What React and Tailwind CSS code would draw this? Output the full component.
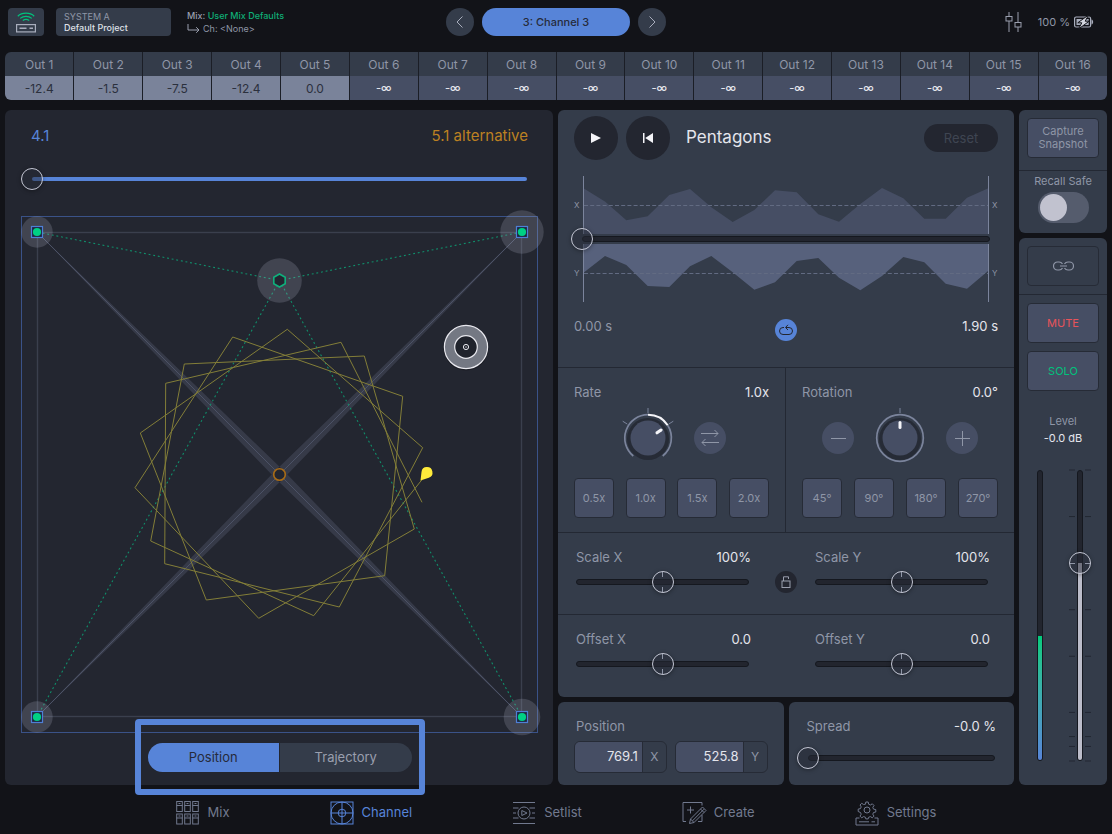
import React, { useState } from "react";

const OUTPUTS = ["-12.4", "-1.5", "-7.5", "-12.4", "0.0"];

const THUMB =
  "[&::-webkit-slider-thumb]:appearance-none [&::-webkit-slider-thumb]:size-[22px] [&::-webkit-slider-thumb]:rounded-full [&::-webkit-slider-thumb]:border [&::-webkit-slider-thumb]:border-[#c3c6d3] [&::-webkit-slider-thumb]:bg-[#262a36]/50 [&::-webkit-slider-thumb]:shadow-[0_1px_4px_rgba(0,0,0,0.35)]";

const TICKS =
  "[&::-webkit-slider-thumb]:bg-[linear-gradient(to_bottom,#8f96a7_5px,transparent_5px,transparent_15px,#8f96a7_15px)] [&::-webkit-slider-thumb]:bg-[length:1px_100%] [&::-webkit-slider-thumb]:bg-center [&::-webkit-slider-thumb]:bg-no-repeat";

function Slider({ label, initial = 0, bright = false, ticks = false }) {
  const [value, setValue] = useState(initial);
  return (
    <div className="grid h-[22px] grid-cols-1 items-center">
      <div
        className={
          bright
            ? "col-start-1 row-start-1 h-1 rounded-full bg-[#5784d8]"
            : "col-start-1 row-start-1 h-[6px] rounded-full border border-[#15181f] bg-[#22252e]"
        }
      />
      <input
        type="range"
        aria-label={label}
        value={value}
        onChange={(e) => setValue(+e.target.value)}
        className={`relative col-start-1 row-start-1 -mx-[11px] h-[22px] w-[calc(100%+22px)] appearance-none bg-transparent ${THUMB} ${ticks ? TICKS : ""}`}
      />
    </div>
  );
}

function LabelledSlider({ label, value, initial, ticks }) {
  return (
    <div className="min-w-0 flex-1">
      <div className="flex justify-between text-[13px] leading-5">
        <span className="text-[#8f96a7]">{label}</span>
        <span className="text-[#e4e5ec]">{value}</span>
      </div>
      <div className="mt-1 pr-[2px]">
        <Slider label={label} initial={initial} ticks={ticks} />
      </div>
    </div>
  );
}

function Knob({ label, full }) {
  return (
    <div className="relative size-[60px] shrink-0">
      <svg viewBox="-30 -30 60 60" className="size-[60px] overflow-visible" fill="none" aria-hidden="true">
        <circle r="21" cy="1" fill="#262b36" />
        <circle r="17.5" fill="#464e64" />
        {full ? (
          <>
            <circle r="23.3" stroke="#7b849c" strokeWidth="1.7" />
            <path d="M0-30v5" stroke="#7b849c" />
            <path d="M0-15.5v5" stroke="#f4f4f8" strokeWidth="3" strokeLinecap="round" />
          </>
        ) : (
          <>
            <path d="M-14.7 18A23.3 23.3 0 0 1 0-23.3" stroke="#7b849c" strokeWidth="1.7" />
            <path d="M19.7-12.7A23.3 23.3 0 0 1 14.7 18" stroke="#7b849c" strokeWidth="1.7" />
            <path d="M0-23.3A23.3 23.3 0 0 1 19.7-12.7" stroke="#f4f4f8" strokeWidth="2" />
            <path d="M0-30v5M-25.3-16.8l4.6 2.9M25.3-16.8l-4.6 2.9" stroke="#7b849c" />
            <path d="M9-5.2l4-2.8" stroke="#f4f4f8" strokeWidth="3" strokeLinecap="round" />
          </>
        )}
      </svg>
      <input type="range" aria-label={label} className="absolute inset-0 size-full cursor-pointer opacity-0" />
    </div>
  );
}

function RoundButton({ label, children }) {
  return (
    <button
      aria-label={label}
      className="flex size-8 shrink-0 items-center justify-center rounded-full bg-[#464e64] text-[#8f96a7]"
    >
      {children}
    </button>
  );
}

function Presets({ items }) {
  return (
    <div className="mt-[10px] flex justify-between">
      {items.map((t) => (
        <button
          key={t}
          className="size-10 rounded-[4px] border border-[#262b36] bg-[#464e64] text-[11px] text-[#8f96a7]"
        >
          {t}
        </button>
      ))}
    </div>
  );
}

function Speaker({ x, y, r }) {
  return (
    <g>
      <circle cx={x} cy={y} r={r} fill="#b9bdd0" fillOpacity="0.2" />
      <rect x={x - 5.5} y={y - 5.5} width="11" height="11" fill="#1b2740" stroke="#4f7fd6" strokeWidth="1.2" />
      <circle cx={x} cy={y} r="4.1" fill="#00d084" />
    </g>
  );
}

function Stage() {
  return (
    <svg
      viewBox="21 216 517 517"
      className="mt-[26px] block w-full overflow-visible"
      fill="none"
      role="img"
      aria-label="Speaker layout"
    >
      <rect x="21.5" y="216.5" width="516" height="516" stroke="#3a5288" />
      <rect x="37.5" y="232.5" width="484" height="484" stroke="#3a3f4d" strokeWidth="1.4" />
      <path
        d="M37 232L283.5 470.5L275.5 478.5ZM522 232L275.5 470.5L283.5 478.5ZM37 717L275.5 470.5L283.5 478.5ZM522 717L283.5 470.5L275.5 478.5Z"
        fill="#363a48"
      />
      <path d="M37 232L522 717M522 232L37 717" stroke="#4c5266" />
      <g stroke="#108f6b" strokeDasharray="1.9 2.8" strokeWidth="1.1">
        <path d="M279.5 280.5L37 232M279.5 280.5L522 232M279.5 280.5L37 717M279.5 280.5L522 717" />
      </g>
      <path
        d="M421.7 480L313.7 615.7L150.7 541L184.3 364L364.3 356L414.3 529L258.7 618.3L135 487.7L232.7 337L402.7 396.3L384.7 575.7L206.3 600L140.3 433L287.3 329.3L422.7 447.7L339.3 607L164.7 563.7L165.7 383.3L341 342.3L422 502.3"
        stroke="#837e38"
        strokeWidth="1"
      />
      <circle cx="279.5" cy="474.5" r="5.8" fill="#232630" stroke="#a96c16" strokeWidth="1.6" />
      <path d="M420.5 480.5L421.5 471.9A5.5 5.5 0 1 1 428.8 477.7Z" fill="#ffeb3b" />
      <Speaker x={37} y={232} r={15.7} />
      <Speaker x={522} y={232} r={21.7} />
      <Speaker x={37} y={717} r={15.7} />
      <Speaker x={522} y={717} r={18.3} />
      <circle cx="279.5" cy="280.5" r="22.3" fill="#b9bdd0" fillOpacity="0.2" />
      <path
        d="M279.5 274L285.2 277.3V283.8L279.5 287L273.8 283.8V277.3Z"
        fill="#232630"
        stroke="#0fb07c"
        strokeWidth="1.6"
      />
      <circle cx="466" cy="348" r="22.5" fill="#000" fillOpacity="0.25" />
      <circle cx="466" cy="347" r="21.6" fill="#747883" stroke="#e8e8ee" strokeWidth="1.2" />
      <circle cx="466" cy="347" r="11.3" fill="#20232c" stroke="#e8e8ee" strokeWidth="1.2" />
      <circle cx="466" cy="347" r="2.6" stroke="#e8e8ee" />
      <circle cx="466" cy="347" r="0.7" fill="#e8e8ee" />
    </svg>
  );
}

function Waveform() {
  return (
    <div className="relative mt-4">
      <svg viewBox="0 0 456 126" className="block w-full" fill="none" role="img" aria-label="X and Y motion">
        <path
          d="M25.5 58V12.3L47.3 25.7L68.3 44.3L89.7 40.3L111.3 19L132 13L153.3 31.3L174.7 46L196.3 34L217 14.3L238.7 16.3L260.3 38.3L281 45.7L302.3 28L324 12L345.3 22.3L366.3 42.7L387.7 42.7L409 21.7L430.3 12.3V58Z"
          fill="#464e64"
        />
        <path
          d="M25.5 68V96.7L47 80L68.3 89L89.7 110L111.3 111L132 90.3L153.3 80L174.7 96.3L196.3 113.7L217 106.3L238.7 85L260.3 82L281 101.7L302.3 114.3L324 100L345.3 81L366.3 86.3L387.7 107.7L409 112.7L430.3 94.7V68Z"
          fill="#57617c"
        />
        <path d="M26 29.5H430M26 97.5H430" stroke="#626b82" strokeDasharray="4 2.2" />
        <path d="M25.5 0V58M25.5 68V126M430.5 0V58M430.5 68V126" stroke="#7b849c" />
        <g fill="#8f96a7" fontSize="8">
          <text x="16" y="32">X</text>
          <text x="16" y="100">Y</text>
          <text x="434" y="32">X</text>
          <text x="434" y="100">Y</text>
        </g>
      </svg>
      <div className="absolute inset-x-6 top-1/2 -translate-y-1/2">
        <Slider label="Playback position" />
      </div>
    </div>
  );
}

const FADER_TICKS = ["0%", "16%", "32%", "48%", "64%", "83.3%", "91.6%", "95%", "100%"];

function Faders() {
  return (
    <div className="mt-[23px] flex min-h-[200px] flex-1 gap-[26px] pl-[18px]">
      <div className="flex w-[6px] flex-col justify-end overflow-hidden rounded-full border border-[#15181f] bg-[#22252e]">
        <div className="h-[43%] bg-linear-to-b from-[#00cc7d] to-[#5784d8]" />
      </div>
      <div className="relative w-[22px]">
        <svg className="absolute inset-0 size-full overflow-visible" aria-hidden="true">
          {FADER_TICKS.map((y) => (
            <g key={y} stroke="#222732">
              <line x1="0" x2="6" y1={y} y2={y} />
              <line x1="16" x2="22" y1={y} y2={y} />
            </g>
          ))}
        </svg>
        <div className="absolute inset-y-0 left-2 flex w-[6px] flex-col justify-end overflow-hidden rounded-full border border-[#15181f] bg-[#22252e]">
          <div className="h-[68%] bg-[#bcbdca]" />
        </div>
        <input
          type="range"
          aria-label="Level"
          defaultValue={68}
          className={`absolute -top-[11px] left-0 h-[calc(100%+22px)] w-[22px] appearance-none bg-transparent [direction:rtl] [writing-mode:vertical-lr] ${THUMB} [&::-webkit-slider-thumb]:bg-[linear-gradient(to_right,#8f96a7_5px,transparent_5px,transparent_15px,#8f96a7_15px)] [&::-webkit-slider-thumb]:bg-[length:100%_1px] [&::-webkit-slider-thumb]:bg-center [&::-webkit-slider-thumb]:bg-no-repeat`}
        />
      </div>
    </div>
  );
}

function NavIcon({ children }) {
  return (
    <svg viewBox="0 0 24 24" className="size-6 shrink-0 overflow-visible" fill="none" stroke="currentColor" aria-hidden="true">
      {children}
    </svg>
  );
}

const NAV = [
  {
    label: "Mix",
    icon: (
      <NavIcon>
        {[0.5, 8.5, 16.5].map((x) =>
          [0.5, 13].map((y) => (
            <g key={`${x}-${y}`}>
              <rect x={x + 0.2} y={y} width="5.6" height="10" />
              <path d={`M${x} ${y + 4}h6M${x + 2} ${y + 2}h2`} />
            </g>
          ))
        )}
      </NavIcon>
    ),
  },
  {
    label: "Channel",
    active: true,
    icon: (
      <NavIcon>
        <rect x="1" y="1" width="22" height="22" />
        <path d="M1 12H23M12 1V23" />
        <circle cx="12" cy="12" r="11" />
        <circle cx="12" cy="12" r="3.8" />
      </NavIcon>
    ),
  },
  {
    label: "Setlist",
    icon: (
      <NavIcon>
        <path d="M1 1.5h22M1 22.5h22M1 7h5.5M17.5 7H23M1 12h3M20 12h3M1 17h5.5M17.5 17H23" />
        <circle cx="12" cy="12" r="6" />
        <path d="M9.8 9.5L15 12l-5.2 2.5z" />
      </NavIcon>
    ),
  },
  {
    label: "Create",
    icon: (
      <NavIcon>
        <path d="M4 20.5H1V1.5h19v3M16 20.5h4V14M5 9h7M8.500 5.500v7" />
        <path d="M7.500 22.500l1-4.500L20.500 6l3.500 3.500L12 21.500zM8.500 18l3.500 3.500M10.500 19.800L22 8.200M18.500 8l3.500 3.500" />
      </NavIcon>
    ),
  },
  {
    label: "Settings",
    icon: (
      <NavIcon>
        <path d="M4.500 17H1v7h22v-7h-3.500M4 20.800h10M16.500 20.800H20" />
        <circle cx="12" cy="9" r="3" />
        <path d="M10.500 3.200L10.800 1h2.400l.4 2.200 1.800.8 1.900-1.200 1.700 1.700-1.200 1.900.7 1.700 2.300.5v2.400l-2.300.5-.7 1.700 1.200 1.900-1.700 1.700-1.900-1.200-1.800.7-.4 1.600h-2.400l-.3-1.600-1.900-.7-1.900 1.200-1.700-1.700 1.200-1.900-.7-1.700L3.200 10.500V8.100l2.300-.5.7-1.700L5 4l1.700-1.700 1.900 1.200z" />
      </NavIcon>
    ),
  },
];

function Coordinate({ axis, value }) {
  return (
    <label className="flex h-8 min-w-0 flex-1 overflow-hidden rounded-[6px] border border-[#262b36]">
      <input
        defaultValue={value}
        className="w-0 min-w-0 flex-1 bg-[#464e64] pr-1 text-right text-[13px] text-[#e4e5ec] outline-none"
      />
      <span className="flex w-6 items-center justify-center border-l border-[#262b36] text-[12px] text-[#8f96a7]">
        {axis}
      </span>
    </label>
  );
}

export default function App() {
  const [tab, setTab] = useState("Position");
  return (
    <div className="flex min-h-screen flex-col bg-[#121318] font-['Inter',sans-serif] text-[#8f96a7]">
      <header className="grid h-[52px] grid-cols-[1fr_auto_1fr] items-start px-2 pt-2">
        <div className="flex">
          <button
            aria-label="Connection"
            className="flex h-7 w-9 items-center justify-center rounded-[4px] bg-[#343c4a]"
          >
            <svg viewBox="0 0 20 21" className="h-[21px] w-5" fill="none" aria-hidden="true">
              <path d="M1.800 4.200C6 .2 14 .2 18.200 4.200M4.200 6.400c3.300-2.800 8.300-2.800 11.600 0M6.800 8.500c2-1.500 4.400-1.500 6.400 0" stroke="#00c27c" strokeWidth="1.200" />
              <rect x="0.600" y="12.600" width="18.800" height="7.300" stroke="#a9aebd" strokeWidth="1.200" />
              <path d="M3.500 16.300h7M13.500 16.300h3.500" stroke="#a9aebd" strokeWidth="1.400" />
            </svg>
          </button>
          <button className="ml-3 flex h-7 w-[115px] flex-col justify-center rounded-[4px] bg-[#343c4a] pl-2 text-left text-[9px] leading-[11px]">
            <span className="text-[#8f96a7]">SYSTEM A</span>
            <span className="font-medium text-[#dfe0e8]">Default Project</span>
          </button>
          <div className="ml-4 pt-px text-[9px] leading-[13px]">
            <div className="font-medium text-[#9a9fae]">
              Mix: <span className="text-[#0fae76]">User Mix Defaults</span>
            </div>
            <div className="flex items-center gap-[3px]">
              <svg viewBox="0 0 13 10" className="h-[10px] w-[13px]" fill="none" stroke="#9a9fae" aria-hidden="true">
                <path d="M1 0v6h11M9.200 3.200L12 6 9.200 8.800" />
              </svg>
              <span>Ch: &lt;None&gt;</span>
            </div>
          </div>
        </div>
        <div className="flex gap-2">
          <button aria-label="Previous channel" className="flex size-7 items-center justify-center rounded-full bg-[#343c4a]">
            <svg viewBox="0 0 8 12" className="h-3 w-2" fill="none" stroke="#a9aebd" aria-hidden="true">
              <path d="M6.500.5L1 6l5.500 5.500" />
            </svg>
          </button>
          <button className="h-7 w-[148px] rounded-full bg-[#5784d8] pt-px text-[11px] font-medium text-[#262b3a]">3: Channel 3</button>
          <button aria-label="Next channel" className="flex size-7 items-center justify-center rounded-full bg-[#343c4a]">
            <svg viewBox="0 0 8 12" className="h-3 w-2" fill="none" stroke="#a9aebd" aria-hidden="true">
              <path d="M1.500.5L7 6l-5.500 5.500" />
            </svg>
          </button>
        </div>
        <div className="flex h-7 items-center justify-end pr-[10px]">
          <button aria-label="Mixer">
            <svg viewBox="0 0 17 20" className="h-5 w-[17px]" fill="none" stroke="#9a9fae" aria-hidden="true">
              <path d="M4 0v4.500M4 9v11M13 0v10.500M13 15v5" />
              <rect x="1" y="4.500" width="6" height="4.500" />
              <rect x="10" y="10.500" width="6" height="4.500" />
            </svg>
          </button>
          <span className="ml-4 text-[11px]">100 %</span>
          <svg viewBox="0 0 20 14" className="ml-1 h-[14px] w-5" aria-hidden="true">
            <rect x="0.600" y="2" width="16" height="10" rx="1.500" fill="none" stroke="#a9aebd" strokeWidth="1.200" />
            <path d="M2.500 4h12.200v6H2.500z" fill="#a9aebd" />
            <path d="M17.500 4.500c2.200.6 2.200 4.400 0 5z" fill="#a9aebd" />
            <path d="M14.500 0L3.800 7.800h4L4.500 14l10.700-7.800h-4z" fill="#d5d7e0" stroke="#121318" strokeWidth="1" />
          </svg>
        </div>
      </header>

      <div className="px-[5px]">
        <div className="overflow-hidden rounded-[6px]">
          <table className="w-full table-fixed border-collapse text-center text-[12px]">
            <thead>
              <tr className="h-6 bg-[#343c4a]">
                {Array.from({ length: 16 }, (_, i) => (
                  <th key={i} scope="col" className="border-l border-[#1b1e26] p-0 pt-px font-normal first:border-l-0">
                    Out {i + 1}
                  </th>
                ))}
              </tr>
            </thead>
            <tbody>
              <tr className="h-6">
                {Array.from({ length: 16 }, (_, i) => (
                  <td
                    key={i}
                    className={
                      i < OUTPUTS.length
                        ? "border-l border-[#1b1e26] bg-[#7a839a] p-0 pt-px text-[#2b303d] first:border-l-0"
                        : "border-l border-[#1b1e26] bg-[#464e64] p-0 pt-px text-[11px] font-medium text-[#e4e5ec]"
                    }
                  >
                    {OUTPUTS[i] ?? "-∞"}
                  </td>
                ))}
              </tr>
            </tbody>
          </table>
        </div>
      </div>

      <main className="mt-[10px] grid flex-1 grid-cols-[minmax(0,548fr)_minmax(0,456fr)_88px] gap-[5px] px-[5px]">
        <section className="flex flex-col rounded-[6px] bg-[#232630] pt-[14px] pr-[15px] pb-[13px] pl-4">
          <div className="flex justify-between px-[10px] text-[15px] leading-6">
            <span className="text-[#5784d8]">4.1</span>
            <span className="text-[#bd8122]">5.1 alternative</span>
          </div>
          <div className="mt-5 px-[11px]">
            <Slider label="Layout morph" bright />
          </div>
          <Stage />
          <div className="relative mx-auto mt-[10px] h-[29px] w-[264px]">
            <div className="grid h-full grid-cols-2 gap-px overflow-hidden rounded-full">
              {["Position", "Trajectory"].map((t) => (
                <button
                  key={t}
                  onClick={() => setTab(t)}
                  aria-pressed={tab === t}
                  className={`pt-px text-[13px] ${tab === t ? "bg-[#5784d8] text-[#262b3a]" : "bg-[#343c4a] text-[#9a9fae]"}`}
                >
                  {t}
                </button>
              ))}
            </div>
            <div className="pointer-events-none absolute -inset-x-[13px] -top-6 -bottom-[23px] rounded-[4px] border-[6px] border-[#5784d8]" />
          </div>
        </section>

        <div className="flex flex-col gap-[5px]">
          <section className="flex-1 rounded-[6px] bg-[#343c4a]">
            <div className="flex items-center px-4 pt-[6px]">
              <button aria-label="Play" className="flex size-11 items-center justify-center rounded-full bg-[#232630]">
                <svg viewBox="0 0 10 10" className="size-[10px]" fill="#f4f4f8" aria-hidden="true">
                  <path d="M0 0L10 5L0 10Z" />
                </svg>
              </button>
              <button aria-label="Back to start" className="ml-2 flex size-11 items-center justify-center rounded-full bg-[#232630]">
                <svg viewBox="0 0 10 10" className="size-[10px]" fill="#f4f4f8" aria-hidden="true">
                  <path d="M0 0h1.500v10H0zM10 0v10L2.200 5z" />
                </svg>
              </button>
              <h1 className="ml-4 text-[17px] text-[#e4e5ec]">Pentagons</h1>
              <button className="ml-auto h-7 w-[74px] rounded-full bg-[#232630] pt-px text-[13px] text-[#3f4552]">Reset</button>
            </div>
            <Waveform />
            <div className="mt-3 grid grid-cols-[1fr_auto_1fr] items-start px-4 pb-[26px] text-[13px] leading-6">
              <span>0.00 s</span>
              <button aria-label="Loop" className="mt-[5px] flex size-[22px] items-center justify-center rounded-full bg-[#5784d8]">
                <svg viewBox="0 0 14 12" className="h-3 w-[14px]" fill="none" stroke="#232630" aria-hidden="true">
                  <path d="M5 3.500H4a3.500 3.500 0 0 0 0 7h6a3.500 3.500 0 0 0 0-7H7M9 .8L6.500 3.500 9 6" />
                </svg>
              </button>
              <span className="text-right text-[#e4e5ec]">1.90 s</span>
            </div>

            <div className="grid grid-cols-2 border-y border-[#232833] text-[13px]">
              <div className="border-r border-[#232833] px-4 py-[14px]">
                <div className="flex justify-between leading-5">
                  <span>Rate</span>
                  <span className="text-[#e4e5ec]">1.0x</span>
                </div>
                <div className="mt-[6px] flex items-center justify-center gap-4">
                  <Knob label="Rate" />
                  <RoundButton label="Change direction">
                    <svg viewBox="0 0 20 18" className="h-[18px] w-5" fill="none" stroke="currentColor" aria-hidden="true">
                      <path d="M1 4.500h17M14.500 1L18 4.500 14.500 8M19 13.500H2M5.500 10L2 13.500 5.500 17" />
                    </svg>
                  </RoundButton>
                </div>
                <Presets items={["0.5x", "1.0x", "1.5x", "2.0x"]} />
              </div>
              <div className="px-4 py-[14px]">
                <div className="flex justify-between leading-5">
                  <span>Rotation</span>
                  <span className="text-[#e4e5ec]">0.0°</span>
                </div>
                <div className="mt-[6px] flex items-center justify-center gap-4">
                  <RoundButton label="Decrease rotation">
                    <svg viewBox="0 0 15 15" className="size-[15px]" stroke="currentColor" aria-hidden="true">
                      <path d="M0 7.500h15" />
                    </svg>
                  </RoundButton>
                  <Knob label="Rotation" full />
                  <RoundButton label="Increase rotation">
                    <svg viewBox="0 0 15 15" className="size-[15px]" stroke="currentColor" aria-hidden="true">
                      <path d="M0 7.500h15M7.500 0v15" />
                    </svg>
                  </RoundButton>
                </div>
                <Presets items={["45°", "90°", "180°", "270°"]} />
              </div>
            </div>

            <div className="flex items-end gap-[18px] pt-[14px] pr-6 pb-[21px] pl-[18px]">
              <LabelledSlider label="Scale X" value="100%" initial={50} ticks />
              <button aria-label="Link scales" className="ml-[6px] flex size-[22px] items-center justify-center rounded-full bg-[#232630]">
                <svg viewBox="0 0 10 12" className="h-3 w-[10px]" fill="none" stroke="#9a9fae" aria-hidden="true">
                  <rect x="1" y="5" width="8" height="6.500" />
                  <path d="M2.500 5V.8h5V3" />
                </svg>
              </button>
              <LabelledSlider label="Scale Y" value="100%" initial={50} ticks />
            </div>
            <div className="flex gap-[18px] border-t border-[#232833] pt-[14px] pr-6 pb-[21px] pl-[18px]">
              <LabelledSlider label="Offset X" value="0.0" initial={50} ticks />
              <div className="ml-[6px] w-[22px]" />
              <LabelledSlider label="Offset Y" value="0.0" initial={50} ticks />
            </div>
          </section>

          <div className="grid grid-cols-2 gap-[5px]">
            <section className="rounded-[6px] bg-[#343c4a] px-4 pt-[14px] pb-3">
              <h2 className="pl-[2px] text-[13px] leading-5">Position</h2>
              <div className="mt-[5px] flex gap-2">
                <Coordinate axis="X" value="769.1" />
                <Coordinate axis="Y" value="525.8" />
              </div>
            </section>
            <section className="rounded-[6px] bg-[#343c4a] px-[18px] pt-[14px] pb-4">
              <div className="flex justify-between text-[13px] leading-5">
                <span>Spread</span>
                <span className="text-[#e4e5ec]">-0.0 %</span>
              </div>
              <div className="mt-[11px] px-px">
                <Slider label="Spread" />
              </div>
            </section>
          </div>
        </div>

        <div className="flex flex-col gap-[5px]">
          <section className="rounded-[6px] bg-[#343c4a] pt-2 pb-[10px] text-[11px]">
            <div className="px-2">
              <button className="h-10 w-full rounded-[4px] border border-[#262b36] bg-[#464e64] leading-[13px]">
                Capture
                <br />
                Snapshot
              </button>
            </div>
            <label className="mt-3 flex flex-col items-center border-t border-[#232833] pt-[2px] leading-4">
              Recall Safe
              <input
                type="checkbox"
                className="mt-[3px] flex h-[31px] w-[51px] appearance-none items-center rounded-full bg-[#555c6d] px-[2px] before:size-[27px] before:rounded-full before:bg-[#c1c2cf] checked:justify-end checked:bg-[#5784d8]"
              />
            </label>
          </section>
          <section className="flex flex-1 flex-col rounded-[6px] bg-[#343c4a] pt-2 pb-6 text-[11px]">
            <div className="border-b border-[#232833] px-2 pb-2">
              <button aria-label="Link channel" className="flex h-10 w-full items-center justify-center rounded-[4px] border border-[#262b36]">
                <svg viewBox="0 0 21 10" className="h-[10px] w-[21px]" fill="none" stroke="#8f96a7" strokeWidth="1.200" aria-hidden="true">
                  <path d="M9.500 3A4 4 0 0 0 6 1H4.500a4 4 0 0 0 0 8H6a4 4 0 0 0 3.500-2M11.500 3A4 4 0 0 1 15 1h1.500a4 4 0 0 1 0 8H15a4 4 0 0 1-3.500-2M7 5h7" />
                </svg>
              </button>
            </div>
            <div className="mt-2 flex flex-col gap-2 px-2">
              <button className="h-10 rounded-[4px] border border-[#262b36] bg-[#464e64] text-[#e8535a]">MUTE</button>
              <button className="h-10 rounded-[4px] border border-[#262b36] bg-[#464e64] text-[#00c27c]">SOLO</button>
            </div>
            <div className="mt-[22px] text-center leading-[17px]">
              <div>Level</div>
              <div className="text-[#e4e5ec]">-0.0 dB</div>
            </div>
            <Faders />
          </section>
        </div>
      </main>

      <nav className="flex h-[49px] items-center justify-center gap-[100px] pt-[6px]">
        {NAV.map((n) => (
          <a
            key={n.label}
            href={`#${n.label.toLowerCase()}`}
            className={`flex items-center gap-2 text-[13px] ${n.active ? "text-[#5784d8]" : "text-[#71798e]"}`}
          >
            {n.icon}
            {n.label}
          </a>
        ))}
      </nav>
    </div>
  );
}
